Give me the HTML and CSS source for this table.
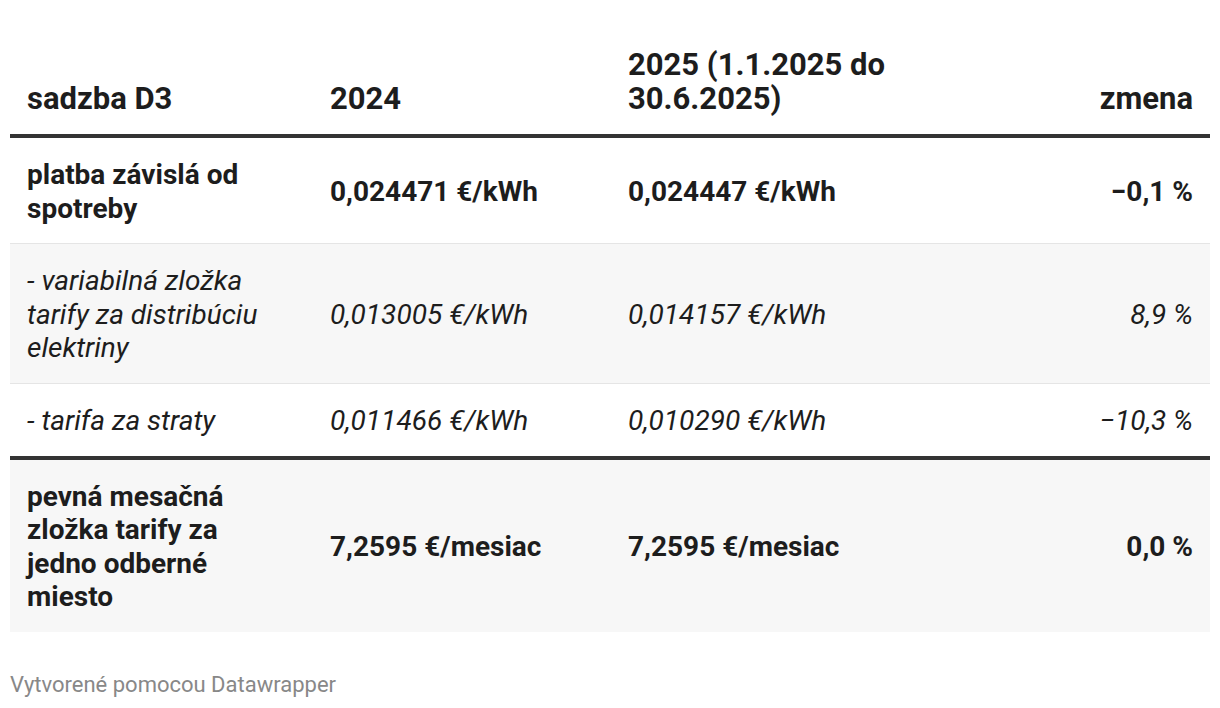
FILE: index.html
```html
<!doctype html>
<html lang="sk">
  <head>
    <meta charset="utf-8">
    <title>Sadzba D3</title>
    <link rel="stylesheet" href="styles.css">
  </head>
  <body>
    <div class="chart">
      <table class="dw-table">
        <colgroup>
          <col class="col-label">
          <col class="col-2024">
          <col class="col-2025">
          <col class="col-change">
        </colgroup>
        <thead>
          <tr>
            <th class="label">sadzba D3</th>
            <th>2024</th>
            <th>2025 (1.1.2025 do 30.6.2025)</th>
            <th class="num">zmena</th>
          </tr>
        </thead>
        <tbody>
          <tr class="bold">
            <td class="label">platba závislá od spotreby</td>
            <td>0,024471 €/kWh</td>
            <td>0,024447 €/kWh</td>
            <td class="num">−0,1 %</td>
          </tr>
          <tr class="sub shaded">
            <td class="label">- variabilná zložka tarify za distribúciu elektriny</td>
            <td>0,013005 €/kWh</td>
            <td>0,014157 €/kWh</td>
            <td class="num">8,9 %</td>
          </tr>
          <tr class="sub">
            <td class="label">- tarifa za straty</td>
            <td>0,011466 €/kWh</td>
            <td>0,010290 €/kWh</td>
            <td class="num">−10,3 %</td>
          </tr>
          <tr class="bold shaded group-start">
            <td class="label">pevná mesačná zložka tarify za jedno odberné miesto</td>
            <td>7,2595 €/mesiac</td>
            <td>7,2595 €/mesiac</td>
            <td class="num">0,0 %</td>
          </tr>
        </tbody>
      </table>
      <div class="footer">Vytvorené pomocou Datawrapper</div>
    </div>
  </body>
</html>
```

FILE: styles.css
```css
body {
  margin: 0;
  padding: 0;
  background: #ffffff;
  color: #1d1d1d;
  font-family: Roboto, "Liberation Sans", Arial, sans-serif;
}

.chart {
  padding: 36px 10px 0 10px;
}

.dw-table {
  width: 1200px;
  border-collapse: collapse;
  table-layout: fixed;
  font-size: 28px;
  line-height: 1.2;
}

.col-label { width: 303px; }
.col-2024 { width: 298px; }
.col-2025 { width: 300px; }

th, td {
  text-align: left;
  padding: 20px 17px 18px 17px;
  vertical-align: middle;
}

th {
  font-size: 31px;
  line-height: 34px;
  font-weight: 700;
  vertical-align: bottom;
  padding-top: 12px;
  padding-bottom: 18px;
  border-bottom: 4px solid #333333;
}

th.label, td.label {
  padding-right: 44px;
}

.num {
  text-align: right;
}

tbody tr {
  border-bottom: 1px solid #e5e5e5;
}

tbody tr:last-child {
  border-bottom: none;
}

tr.bold td {
  font-weight: 700;
}

tr.sub td {
  font-style: italic;
}

tr.shaded td {
  background: #f7f7f7;
}

tr.group-start td {
  border-top: 4px solid #333333;
}

.footer {
  margin-top: 40px;
  font-size: 22px;
  line-height: 1.2;
  color: #888888;
}
```
